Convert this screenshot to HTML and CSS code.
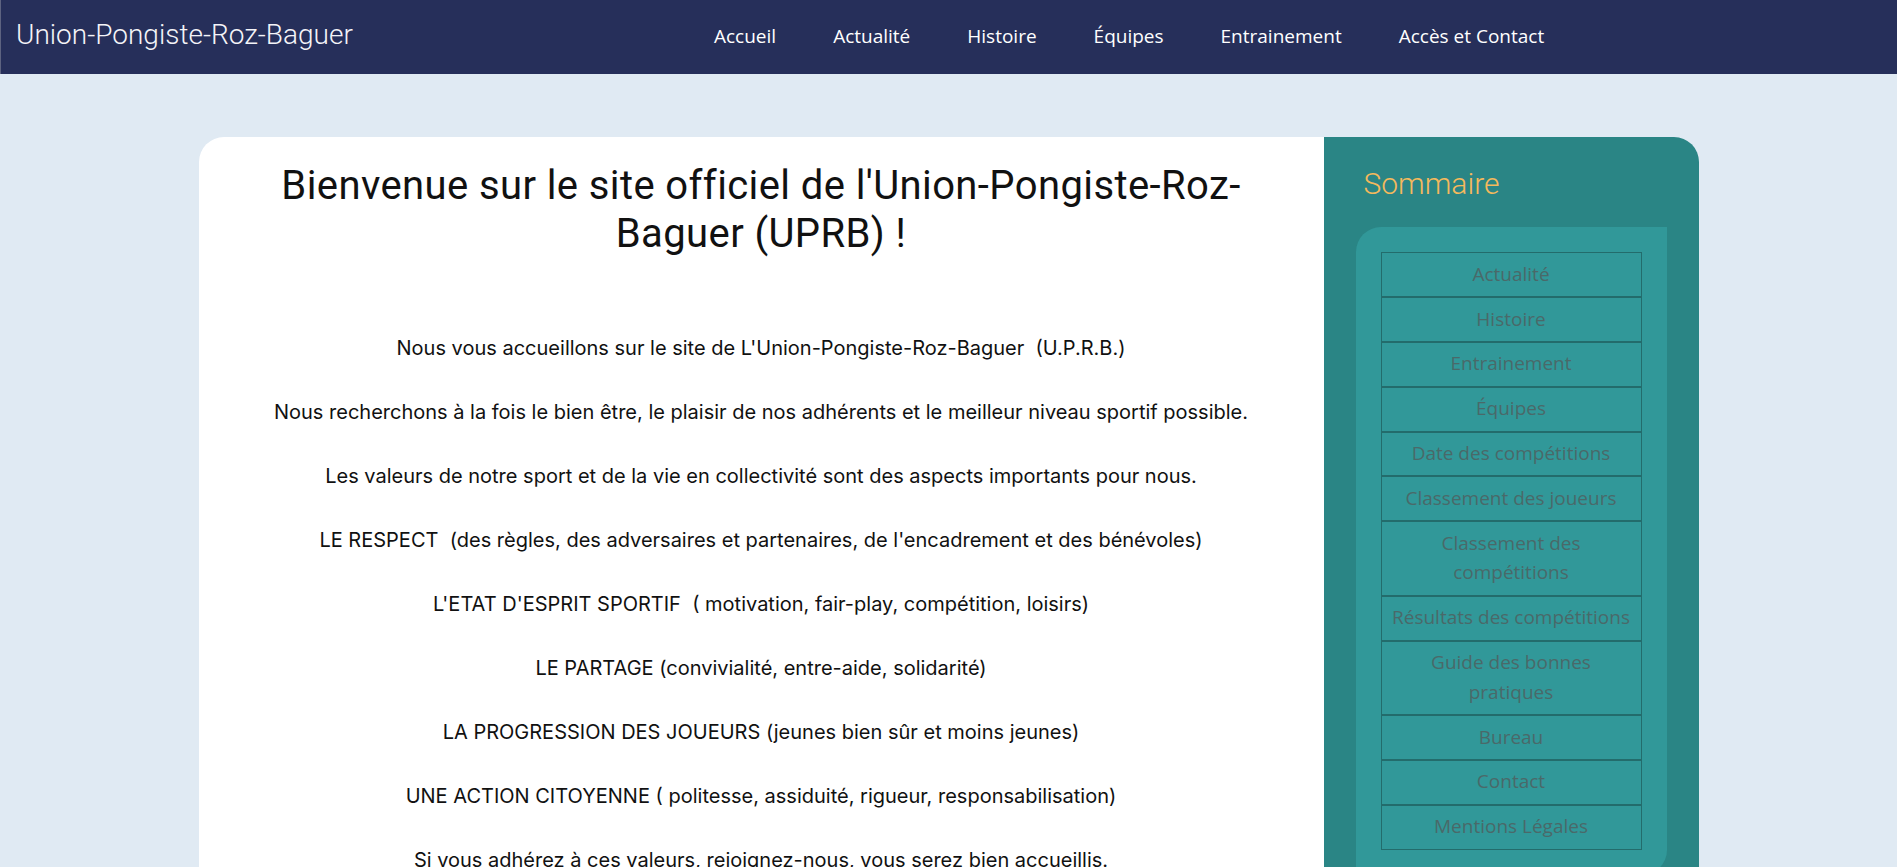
FILE: index.html
```html
<!DOCTYPE html>
<html lang="fr">
<head>
<meta charset="utf-8">
<title>Union-Pongiste-Roz-Baguer</title>
<link rel="stylesheet" href="styles.css">
</head>
<body>
<header class="topbar">
  <div class="brand">Union-Pongiste-Roz-Baguer</div>
  <nav class="mainnav">
    <a href="#">Accueil</a>
    <a href="#">Actualité</a>
    <a href="#">Histoire</a>
    <a href="#">Équipes</a>
    <a href="#">Entrainement</a>
    <a href="#">Accès et Contact</a>
  </nav>
</header>
<div class="page">
  <main class="content">
    <h1 class="welcome">Bienvenue sur le site officiel de l'Union-Pongiste-Roz-Baguer (UPRB) !</h1>
    <p>Nous vous accueillons sur le site de L'Union-Pongiste-Roz-Baguer&nbsp; (U.P.R.B.)</p>
    <p>Nous recherchons à la fois le bien être, le plaisir de nos adhérents et le meilleur niveau sportif possible.</p>
    <p>Les valeurs de notre sport et de la vie en collectivité sont des aspects importants pour nous.</p>
    <p>LE RESPECT&nbsp; (des règles, des adversaires et partenaires, de l'encadrement et des bénévoles)</p>
    <p>L'ETAT D'ESPRIT SPORTIF&nbsp; ( motivation, fair-play, compétition, loisirs)</p>
    <p>LE PARTAGE (convivialité, entre-aide, solidarité)</p>
    <p>LA PROGRESSION DES JOUEURS (jeunes bien sûr et moins jeunes)</p>
    <p>UNE ACTION CITOYENNE ( politesse, assiduité, rigueur, responsabilisation)</p>
    <p>Si vous adhérez à ces valeurs, rejoignez-nous, vous serez bien accueillis.</p>
  </main>
  <aside class="summary">
    <h2 class="summary-title">Sommaire</h2>
    <div class="summary-box">
      <ul class="summary-list">
        <li><a href="#">Actualité</a></li>
        <li><a href="#">Histoire</a></li>
        <li><a href="#">Entrainement</a></li>
        <li><a href="#">Équipes</a></li>
        <li><a href="#">Date des compétitions</a></li>
        <li><a href="#">Classement des joueurs</a></li>
        <li><a href="#">Classement des compétitions</a></li>
        <li><a href="#">Résultats des compétitions</a></li>
        <li><a href="#">Guide des bonnes pratiques</a></li>
        <li><a href="#">Bureau</a></li>
        <li><a href="#">Contact</a></li>
        <li><a href="#">Mentions Légales</a></li>
      </ul>
    </div>
  </aside>
</div>
</body>
</html>
```

FILE: styles.css
```css
* { box-sizing: border-box; }

body {
  margin: 0;
  background: #e0eaf3;
  font-family: Roboto, "Liberation Sans", sans-serif;
  color: #111;
}

.topbar {
  height: 74px;
  background: #262f5a;
  display: flex;
  align-items: center;
  border-left: 1px solid #5d6380;
}

.brand {
  width: 713px;
  padding-left: 15px;
  padding-bottom: 4px;
  font-family: Roboto, sans-serif;
  font-weight: 300;
  font-size: 28px;
  line-height: 28px;
  color: #f4f4f8;
  white-space: nowrap;
}

.mainnav {
  display: flex;
  gap: 57px;
  padding-bottom: 3px;
}

.mainnav a {
  font-family: "Open Sans", sans-serif;
  font-size: 19px;
  color: #ffffff;
  text-decoration: none;
  white-space: nowrap;
}

.page {
  display: flex;
  max-width: 1500px;
  margin: 63px auto 0;
}

.content {
  flex: 0 0 75%;
  background: #ffffff;
  border-radius: 25px 0 0 0;
  padding: 0 20px 40px;
  text-align: center;
}

.welcome {
  max-width: 1010px;
  margin: 25px auto 76px;
  font-family: Roboto, sans-serif;
  font-weight: 400;
  font-size: 40px;
  line-height: 48px;
  letter-spacing: 0.4px;
  color: #111;
}

.content p {
  margin: 0 0 36px;
  font-family: Inter, Roboto, sans-serif;
  font-size: 20px;
  line-height: 28px;
  color: #111;
}

.summary {
  flex: 0 0 25%;
  background: #2a8585;
  border-radius: 0 25px 0 0;
  padding: 0 32px 40px;
}

.summary-title {
  margin: 0;
  padding: 29px 0 0 8px;
  font-family: Roboto, sans-serif;
  font-weight: 300;
  font-size: 30px;
  line-height: 36px;
  color: #f5b95c;
}

.summary-box {
  margin-top: 25px;
  background: #319899;
  border-radius: 25px 0 25px 0;
  padding: 25px;
}

.summary-list {
  list-style: none;
  margin: 0;
  padding: 0;
}

.summary-list li {
  border: 1px solid #236c6c;
  padding: 6.7px 5px;
  text-align: center;
  font-family: "Open Sans", sans-serif;
  font-size: 19px;
  line-height: 29.5px;
}

.summary-list a {
  color: #4a6969;
  text-decoration: none;
}
```
